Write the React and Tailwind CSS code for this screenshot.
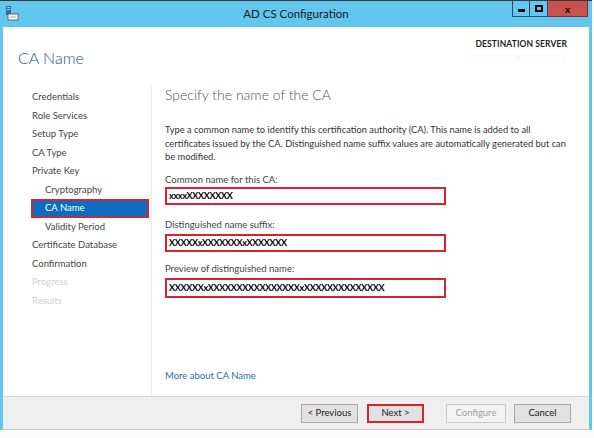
import React from 'react';

const navItems = [
  { label: 'Credentials' },
  { label: 'Role Services' },
  { label: 'Setup Type' },
  { label: 'CA Type' },
  { label: 'Private Key' },
  { label: 'Cryptography', sub: true },
  { label: 'CA Name', sub: true, active: true },
  { label: 'Validity Period', sub: true },
  { label: 'Certificate Database' },
  { label: 'Confirmation' },
  { label: 'Progress', disabled: true },
  { label: 'Results', disabled: true },
];

const AppIcon = () => (
  <svg width="14" height="16" viewBox="0 0 14 16">
    <rect x="1" y="1" width="5" height="9" fill="#2f6fb3" />
    <rect x="2" y="2" width="3" height="1" fill="#9fd0f0" />
    <rect x="2" y="4" width="3" height="1" fill="#9fd0f0" />
    <rect x="3" y="9" width="10" height="6" fill="#f4f4f4" stroke="#555" strokeWidth="0.8" />
    <rect x="5" y="11" width="6" height="2" fill="#cfcfcf" />
  </svg>
);

const Field = ({ label, value, className = '', gap = 'mt-[1px]', h = 'h-[18px]' }) => (
  <div className={className}>
    <div className="text-[9.5px] text-[#444] leading-[12px]">{label}</div>
    <div className={`${gap} w-[281px] ${h} border-2 border-[#d9222f] bg-white flex items-center px-[2px]`}>
      <span className="text-[9px] tracking-[-0.3px] text-black leading-none font-bold">{value}</span>
    </div>
  </div>
);

const Btn = ({ children, highlight, disabled }) => (
  <div
    className={`h-[19px] flex items-center justify-center text-[9.5px] ${
      highlight
        ? 'w-[57px] border-2 border-[#d9222f] bg-[#e1e1e1] text-[#222]'
        : disabled
        ? 'w-[60px] border border-[#c9c9c9] bg-[#f4f4f4] text-[#a0a0a0]'
        : 'w-[57px] border border-[#a9a9a9] bg-[#e1e1e1] text-[#222]'
    }`}
  >
    {children}
  </div>
);

export default function App() {
  return (
    <div className="w-[594px] h-[438px] bg-[#fbfbfb] overflow-hidden" style={{ fontFamily: 'Lato, "Open Sans", sans-serif' }}>
      <div className="w-[592px] h-[430px] flex flex-col bg-[#62c6ee] border-t border-[#3a3a3a] px-[3px]">
        {/* Title bar */}
        <div className="relative h-[26px] flex items-center justify-center">
          <div className="absolute left-[2px] top-[4px]">
            <AppIcon />
          </div>
          <span className="text-[11.5px] text-[#1a1a1a]">AD CS Configuration</span>
          <div className="absolute right-[1px] top-0 flex h-[16px]">
            <div className="w-[18px] h-full border border-[#2b4a66] border-t-0 flex items-end justify-center pb-[4px]">
              <div className="w-[7px] h-[3px] bg-black" />
            </div>
            <div className="w-[18px] h-full border-b border-r border-[#2b4a66] flex items-center justify-center">
              <div className="w-[8px] h-[7px] border-2 border-black" />
            </div>
            <div className="w-[40px] h-full bg-[#c9524f] border-b border-r border-[#7a3030] flex items-center justify-center">
              <span className="text-[10px] font-bold text-black leading-none">x</span>
            </div>
          </div>
        </div>

        {/* Client area */}
        <div className="flex-1 bg-white flex flex-col">
          {/* Header */}
          <div className="h-[58px] flex justify-between pl-[15px] pr-[22px]">
            <div className="pt-[18px] text-[16px] font-light text-[#2a5a7c] leading-[26px]">CA Name</div>
            <div className="pt-[11px] flex flex-col items-end">
              <div className="text-[8.5px] font-bold text-[#222] tracking-[0.1px] leading-[12px]">DESTINATION SERVER</div>
              <div className="mt-[3px] w-[98px] h-[10px] bg-[#fdfdfd] flex justify-center">
                <span className="text-[6px] text-[#888] leading-none">.</span>
              </div>
            </div>
          </div>

          {/* Body */}
          <div className="flex-1 flex">
            <div className="w-[149px] pt-[3px] border-r border-[#ececec]">
              {navItems.map((item) => (
                <div
                  key={item.label}
                  className={`h-[18.5px] flex items-center text-[9.5px] ${
                    item.active
                      ? 'ml-[28px] mr-[2px] border-2 border-[#d9222f] bg-[#0a6dc2] text-white pl-[12px]'
                      : item.sub
                      ? 'pl-[42px]'
                      : 'pl-[29px]'
                  } ${item.disabled ? 'text-[#d0d0d0]' : item.active ? '' : 'text-[#444]'}`}
                >
                  {item.label}
                </div>
              ))}
            </div>

            <div className="flex-1 pl-[13px] pr-[20px] flex flex-col">
              <div className="text-[14px] font-light text-[#555] leading-[20px]">Specify the name of the CA</div>
              <p className="mt-[18px] text-[9.3px] leading-[13.5px] text-[#333] whitespace-nowrap">
                Type a common name to identify this certification authority (CA). This name is added to all
                <br />
                certificates issued by the CA. Distinguished name suffix values are automatically generated but can
                <br />
                be modified.
              </p>
              <Field className="mt-[10px]" label="Common name for this CA:" value="xxxxXXXXXXXX" />
              <Field className="mt-[14px]" gap="mt-[3px]" label="Distinguished name suffix:" value="XXXXXxXXXXXXXxXXXXXXX" />
              <Field className="mt-[11px]" gap="mt-[3px]" h="h-[20px]" label="Preview of distinguished name:" value="XXXXXXxXXXXXXXXXXXXXXXXxXXXXXXXXXXXXXX" />
              <div className="mt-auto mb-[13px] text-[9.5px] text-[#1f6fb2]">More about CA Name</div>
            </div>
          </div>

          {/* Footer */}
          <div className="h-[34px] bg-[#efefef] border-t border-[#d6d6d6] border-b border-b-[#c8c8c8] flex items-center justify-end pr-[18px]">
            <Btn>&lt; Previous</Btn>
            <div className="w-[9px]" />
            <Btn highlight>Next &gt;</Btn>
            <div className="w-[22px]" />
            <Btn disabled>Configure</Btn>
            <div className="w-[8px]" />
            <Btn>Cancel</Btn>
          </div>
        </div>
      </div>
    </div>
  );
}
